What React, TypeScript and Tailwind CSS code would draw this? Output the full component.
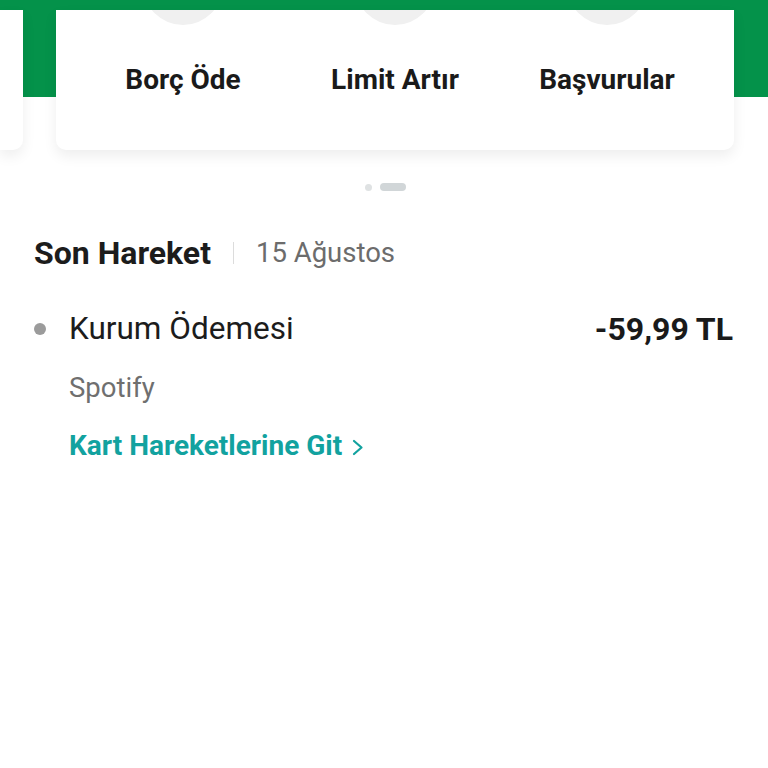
const actions = ["Borç Öde", "Limit Artır", "Başvurular"];

function ActionCard() {
  return (
    <div className="ml-[33px] flex h-[140px] w-[678px] overflow-hidden rounded-b-[10px] bg-white px-[21px] shadow-[0_6px_14px_rgba(0,0,0,0.07)]">
      {actions.map((label) => (
        <div key={label} className="flex w-[212px] flex-col items-center">
          <div className="-mt-[65px] h-[80px] w-[80px] shrink-0 rounded-full bg-[#f0f0f0]" />
          <span className="mt-[39px] text-[28px] leading-[32px] font-bold text-[#1a1a1a]">
            {label}
          </span>
        </div>
      ))}
    </div>
  );
}

export default function App() {
  return (
    <div className="min-h-[768px] w-[768px] bg-white font-['Roboto',sans-serif]">
      <div className="bg-[linear-gradient(to_bottom,#04924a_97px,#ffffff_97px)] pt-[10px]">
        <div className="flex">
          <div className="h-[140px] w-[23px] rounded-br-[10px] bg-white shadow-[0_6px_14px_rgba(0,0,0,0.07)]" />
          <ActionCard />
        </div>
      </div>

      <div className="mt-[33px] flex items-center justify-center gap-[8px] pl-[2px]">
        <span className="h-[7px] w-[7px] rounded-full bg-[#dfe2e3]" />
        <span className="h-[8px] w-[26px] rounded-full bg-[#d1d6d8]" />
      </div>

      <div className="pl-[34px] pr-[35px]">
        <div className="mt-[44px] flex items-center">
          <h2 className="text-[32px] leading-[36px] font-bold text-[#1c1c1c]">Son Hareket</h2>
          <span className="mx-[22px] h-[22px] w-px bg-[#dcdcdc]" />
          <span className="text-[27.5px] leading-[36px] text-[#6c6c6c]">15 Ağustos</span>
        </div>

        <div className="mt-[40px] flex items-center">
          <span className="h-[12px] w-[12px] shrink-0 rounded-full bg-[#9b9b9b]" />
          <span className="ml-[23px] text-[31.5px] leading-[36px] text-[#1c1c1c]">Kurum Ödemesi</span>
          <span className="ml-auto text-[32px] leading-[36px] font-bold text-[#1a1a1a]">-59,99 TL</span>
        </div>

        <div className="ml-[35px]">
          <p className="mt-[25px] text-[27.5px] leading-[32px] text-[#6f6f6f]">Spotify</p>
          <a className="mt-[26px] flex items-center text-[28px] leading-[32px] font-bold text-[#12a29f]">
            Kart Hareketlerine Git
            <svg className="ml-[10px] mt-[2px]" width="12" height="17" viewBox="0 0 12 17" fill="none">
              <polyline points="2,2 9.5,8.5 2,15" stroke="currentColor" strokeWidth="2.2" strokeLinecap="round" strokeLinejoin="round" />
            </svg>
          </a>
        </div>
      </div>
    </div>
  );
}
